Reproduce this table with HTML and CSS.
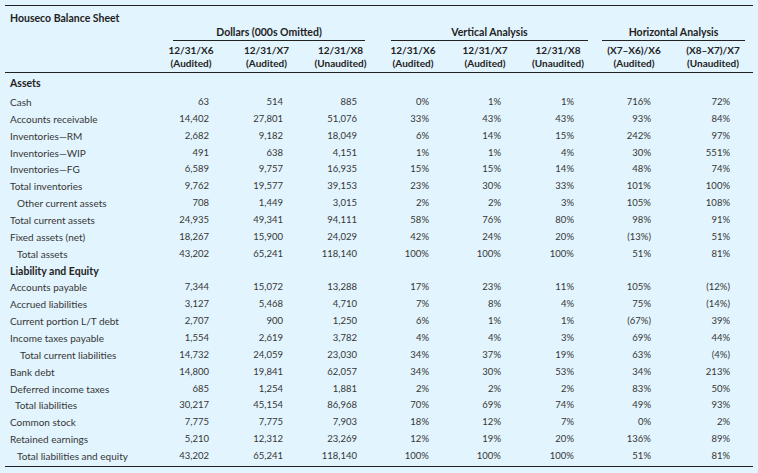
FILE: index.html
```html
<!DOCTYPE html>
<html>
<head>
<meta charset="utf-8">
<link rel="stylesheet" href="styles.css">
</head>
<body>
<table class="sheet">
  <colgroup>
    <col class="w-label"><col class="w-c1"><col class="w-c2"><col class="w-c3"><col class="w-v1"><col class="w-v2"><col class="w-v3"><col class="w-h1"><col class="w-h2">
  </colgroup>
  <thead>
    <tr class="title-row"><th colspan="9" class="title">Houseco Balance Sheet</th></tr>
    <tr class="group-row">
      <th></th>
      <th colspan="3"><div class="grp grp-d">Dollars (000s Omitted)</div></th>
      <th colspan="3"><div class="grp grp-v">Vertical Analysis</div></th>
      <th colspan="2"><div class="grp grp-h">Horizontal Analysis</div></th>
    </tr>
    <tr class="date-row">
      <th></th>
      <th>12/31/X6<br>(Audited)</th>
      <th>12/31/X7<br>(Audited)</th>
      <th>12/31/X8<br>(Unaudited)</th>
      <th>12/31/X6<br>(Audited)</th>
      <th>12/31/X7<br>(Audited)</th>
      <th>12/31/X8<br>(Unaudited)</th>
      <th>(X7–X6)/X6<br>(Audited)</th>
      <th>(X8–X7)/X7<br>(Unaudited)</th>
    </tr>
  </thead>
  <tbody>
    <tr class="first"><td class="sec" colspan="9">Assets</td></tr>
    <tr><td class="lb">Cash</td><td>63</td><td>514</td><td>885</td><td>0%</td><td>1%</td><td>1%</td><td>716%</td><td>72%</td></tr>
    <tr><td class="lb">Accounts receivable</td><td>14,402</td><td>27,801</td><td>51,076</td><td>33%</td><td>43%</td><td>43%</td><td>93%</td><td>84%</td></tr>
    <tr><td class="lb">Inventories—RM</td><td>2,682</td><td>9,182</td><td>18,049</td><td>6%</td><td>14%</td><td>15%</td><td>242%</td><td>97%</td></tr>
    <tr><td class="lb">Inventories—WIP</td><td>491</td><td>638</td><td>4,151</td><td>1%</td><td>1%</td><td>4%</td><td>30%</td><td>551%</td></tr>
    <tr><td class="lb">Inventories—FG</td><td>6,589</td><td>9,757</td><td>16,935</td><td>15%</td><td>15%</td><td>14%</td><td>48%</td><td>74%</td></tr>
    <tr><td class="lb">Total inventories</td><td>9,762</td><td>19,577</td><td>39,153</td><td>23%</td><td>30%</td><td>33%</td><td>101%</td><td>100%</td></tr>
    <tr><td class="lb in-a">Other current assets</td><td>708</td><td>1,449</td><td>3,015</td><td>2%</td><td>2%</td><td>3%</td><td>105%</td><td>108%</td></tr>
    <tr><td class="lb">Total current assets</td><td>24,935</td><td>49,341</td><td>94,111</td><td>58%</td><td>76%</td><td>80%</td><td>98%</td><td>91%</td></tr>
    <tr><td class="lb">Fixed assets (net)</td><td>18,267</td><td>15,900</td><td>24,029</td><td>42%</td><td>24%</td><td>20%</td><td>(13%)</td><td>51%</td></tr>
    <tr><td class="lb in-a">Total assets</td><td>43,202</td><td>65,241</td><td>118,140</td><td>100%</td><td>100%</td><td>100%</td><td>51%</td><td>81%</td></tr>
    <tr><td class="sec" colspan="9">Liability and Equity</td></tr>
    <tr><td class="lb">Accounts payable</td><td>7,344</td><td>15,072</td><td>13,288</td><td>17%</td><td>23%</td><td>11%</td><td>105%</td><td>(12%)</td></tr>
    <tr><td class="lb">Accrued liabilities</td><td>3,127</td><td>5,468</td><td>4,710</td><td>7%</td><td>8%</td><td>4%</td><td>75%</td><td>(14%)</td></tr>
    <tr><td class="lb">Current portion L/T debt</td><td>2,707</td><td>900</td><td>1,250</td><td>6%</td><td>1%</td><td>1%</td><td>(67%)</td><td>39%</td></tr>
    <tr><td class="lb">Income taxes payable</td><td>1,554</td><td>2,619</td><td>3,782</td><td>4%</td><td>4%</td><td>3%</td><td>69%</td><td>44%</td></tr>
    <tr><td class="lb in-b">Total current liabilities</td><td>14,732</td><td>24,059</td><td>23,030</td><td>34%</td><td>37%</td><td>19%</td><td>63%</td><td>(4%)</td></tr>
    <tr><td class="lb">Bank debt</td><td>14,800</td><td>19,841</td><td>62,057</td><td>34%</td><td>30%</td><td>53%</td><td>34%</td><td>213%</td></tr>
    <tr><td class="lb">Deferred income taxes</td><td>685</td><td>1,254</td><td>1,881</td><td>2%</td><td>2%</td><td>2%</td><td>83%</td><td>50%</td></tr>
    <tr><td class="lb in-c">Total liabilities</td><td>30,217</td><td>45,154</td><td>86,968</td><td>70%</td><td>69%</td><td>74%</td><td>49%</td><td>93%</td></tr>
    <tr><td class="lb">Common stock</td><td>7,775</td><td>7,775</td><td>7,903</td><td>18%</td><td>12%</td><td>7%</td><td>0%</td><td>2%</td></tr>
    <tr><td class="lb">Retained earnings</td><td>5,210</td><td>12,312</td><td>23,269</td><td>12%</td><td>19%</td><td>20%</td><td>136%</td><td>89%</td></tr>
    <tr class="last"><td class="lb in-a">Total liabilities and equity</td><td>43,202</td><td>65,241</td><td>118,140</td><td>100%</td><td>100%</td><td>100%</td><td>51%</td><td>81%</td></tr>
  </tbody>
</table>
</body>
</html>
```
FILE: styles.css
```css
html, body {
  margin: 0;
  background: #e2f4fd;
}
body {
  padding: 5px;
  font-family: Lato, "Open Sans", "Liberation Sans", sans-serif;
  font-size: 10px;
  color: #333;
}
.sheet {
  width: 748px;
  table-layout: fixed;
  border-collapse: collapse;
  border-spacing: 0;
}
.w-label { width: 148px; }
.w-c1 { width: 76px; }
.w-c2 { width: 75px; }
.w-c3 { width: 73px; }
.w-v1 { width: 72px; }
.w-v2 { width: 72px; }
.w-v3 { width: 74px; }
.w-h1 { width: 78px; }
.w-h2 { width: 80px; }

th, td {
  padding: 0;
  white-space: nowrap;
}
thead th {
  font-weight: 700;
  color: #222;
  text-align: center;
  line-height: 13px;
  font-size: 10px;
}
.title-row th {
  border-top: 1.5px solid #222;
  text-align: left;
  padding: 4px 0 0 5px;
  height: 16px;
  font-size: 10.5px;
  vertical-align: middle;
}
.group-row th {
  height: 15px;
  vertical-align: bottom;
}
.grp {
  border-bottom: 1.5px solid #222;
  padding-bottom: 1px;
  text-align: center;
  font-size: 10.5px;
}
.grp-d { margin: 0 12px 0 20px; }
.grp-v { margin: 0 7px 0 14px; }
.grp-h { margin: 0 8px 0 7px; }
.date-row th {
  padding: 3px 0 2px;
  border-bottom: 1.5px solid #222;
}
tbody td {
  height: 16.86px;
  line-height: 16.86px;
  text-align: right;
  color: #363636;
  font-size: 9.5px;
}
tbody tr.first td {
  height: 19px;
  line-height: 21px;
}
tbody td:nth-child(2) { padding-right: 20px; }
tbody td:nth-child(3) { padding-right: 21px; }
tbody td:nth-child(4) { padding-right: 20px; }
tbody td:nth-child(5) { padding-right: 20px; }
tbody td:nth-child(6) { padding-right: 20px; }
tbody td:nth-child(7) { padding-right: 21px; }
tbody td:nth-child(8) { padding-right: 22px; }
tbody td:nth-child(9) { padding-right: 23px; }
tbody td.lb {
  text-align: left;
  padding-left: 5px;
  padding-right: 0;
  font-size: 10px;
}
tbody td.in-a { padding-left: 12px; }
tbody td.in-b { padding-left: 15px; }
tbody td.in-c { padding-left: 10px; }
tbody td.sec {
  text-align: left;
  padding-left: 5px;
  font-weight: 700;
  color: #222;
  font-size: 10.5px;
}
tbody tr.last td {
  border-bottom: 1.5px solid #222;
  height: 18px;
  line-height: 16px;
  vertical-align: top;
}
```
